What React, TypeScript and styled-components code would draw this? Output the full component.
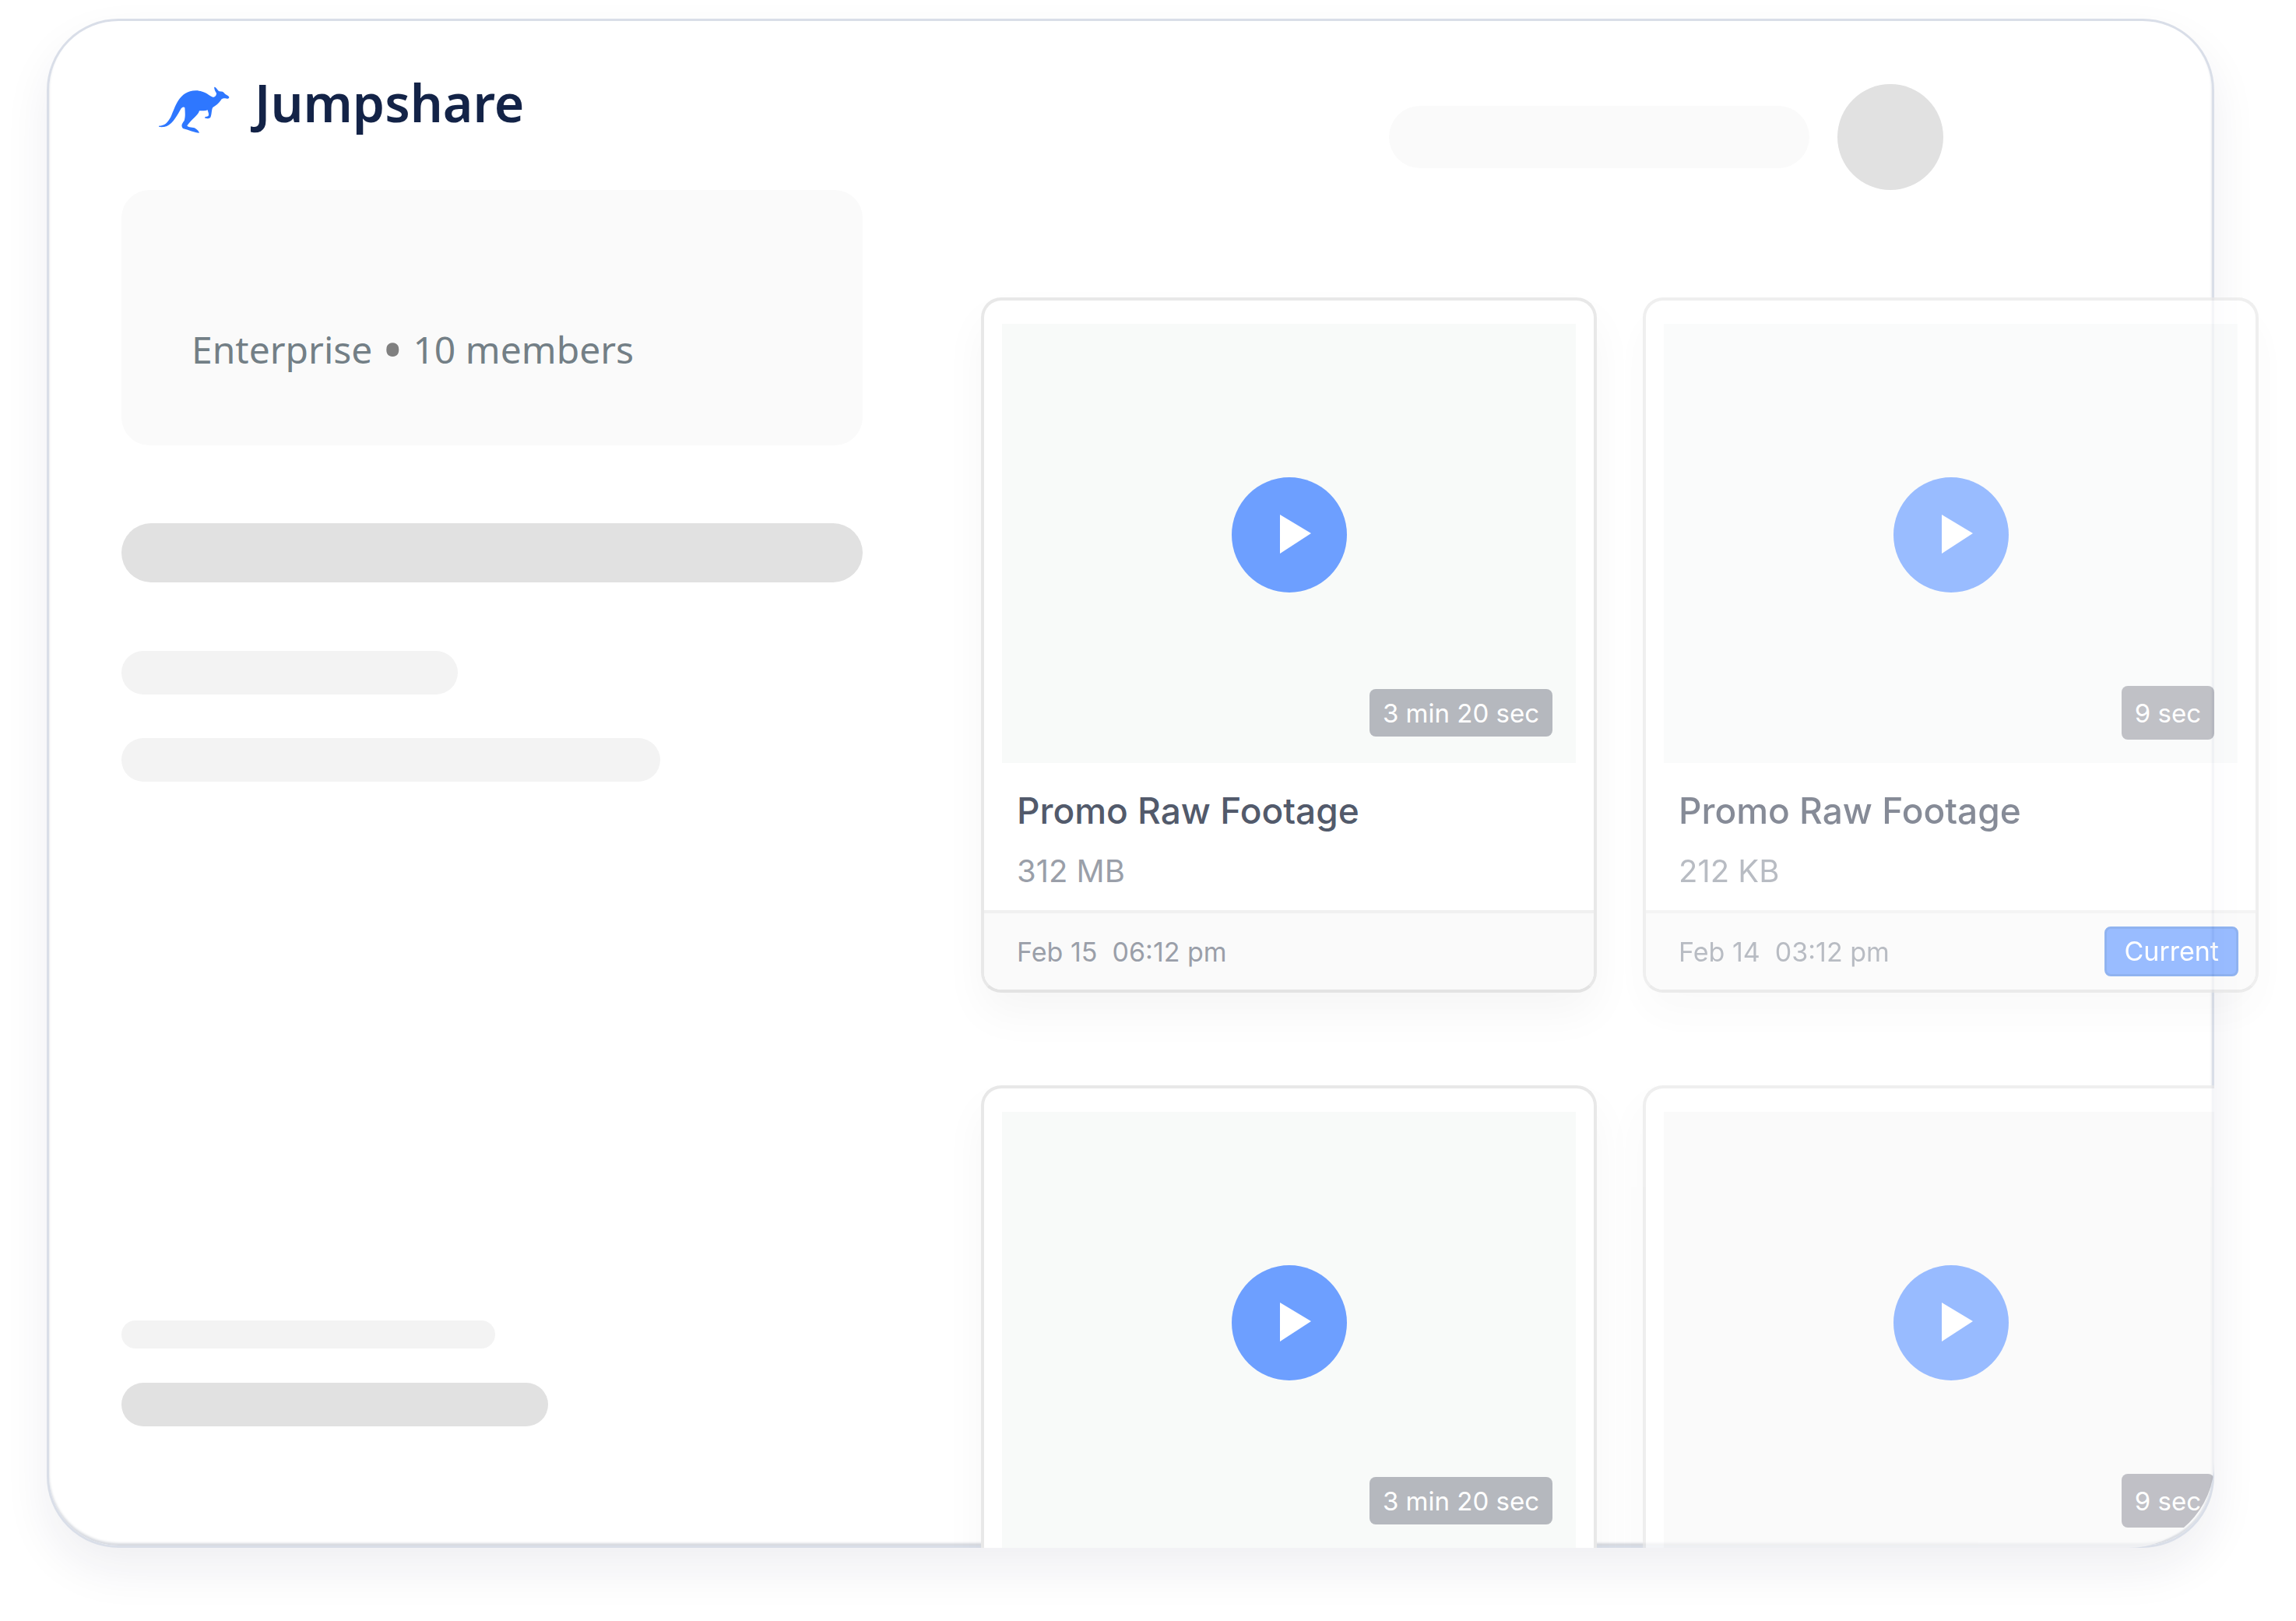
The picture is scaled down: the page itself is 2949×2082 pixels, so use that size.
import React from 'react';
import styled, { createGlobalStyle } from 'styled-components';

const GlobalStyle = createGlobalStyle`
  *, *::before, *::after { box-sizing: border-box; }
  html, body, #root { height: 100%; }
  body {
    margin: 0;
    background: #fff;
    overflow: hidden;
    font-family: Inter, "Liberation Sans", sans-serif;
  }
`;

const Page = styled.div`
  display: flex;
  height: 100%;
  min-height: 1400px;
  padding: 24px 105px 94px 60px;
`;

const Window = styled.div`
  flex: 1;
  min-width: 0;
  display: grid;
  grid-template-columns: minmax(0, 1045fr) minmax(0, 1733fr);
  grid-template-rows: minmax(0, 1fr);
  border: 3px solid #d9dee8;
  border-radius: 92px;
  background: #fff;
  box-shadow:
    0 28px 60px rgba(24, 24, 64, 0.07),
    inset 0 -3px 3px rgba(120, 130, 150, 0.3);
`;

const Sidebar = styled.aside`
  display: flex;
  flex-direction: column;
  align-items: flex-start;
  padding: 64px 0 153px 93px;
`;

const Brand = styled.a`
  display: flex;
  align-items: flex-end;
  gap: 32px;
  margin: 0 0 73px 47px;
  color: #132347;
  font-family: "Noto Sans", "Open Sans", sans-serif;
  font-size: 66px;
  font-weight: 600;
  line-height: 80px;
  text-decoration: none;
`;

const TeamPanel = styled.section`
  width: 100%;
  padding: 173px 90px 91px;
  border-radius: 36px;
  background: #fafafa;
`;

const TeamPlan = styled.p`
  margin: 0;
  color: #737f86;
  font-family: "Noto Sans", "Open Sans", sans-serif;
  font-size: 48px;
  line-height: 64px;
  white-space: nowrap;
`;

const Dot = styled.span`
  color: #808080;
  font-size: 72px;
  line-height: 0;
  vertical-align: -8px;
`;

const tones = { dark: '#e1e1e1', mid: '#f3f3f3', light: '#fafafa' };

const Bar = styled.div<{ $tone: keyof typeof tones; $width?: number; $height: number }>`
  flex: none;
  width: ${(p) => (p.$width ? `${p.$width}px` : '100%')};
  max-width: 100%;
  height: ${(p) => p.$height}px;
  border-radius: 40px;
  background: ${(p) => tones[p.$tone]};
`;

const NavBars = styled.div`
  display: flex;
  flex-direction: column;
  gap: 56px;
  width: 100%;
  margin-top: 88px;
`;

const ActiveNav = styled.div`
  width: 100%;
  margin-top: 100px;
`;

const FootBars = styled.div`
  display: flex;
  flex-direction: column;
  gap: 44px;
  width: 100%;
  margin-top: auto;
`;

const Main = styled.main`
  display: flex;
  flex-direction: column;
  min-width: 0;
  margin: 0 -3px -3px 0;
`;

const TopBar = styled.header`
  display: flex;
  justify-content: flex-end;
  align-items: center;
  gap: 36px;
  padding: 81px 348px 138px 0;
`;

const Avatar = styled.div`
  flex: none;
  width: 136px;
  height: 136px;
  border-radius: 50%;
  background: #e1e1e1;
`;

const Shelf = styled.div`
  padding-left: 152px;
`;

const ClippedShelf = styled(Shelf)`
  flex: 1;
  min-height: 0;
  margin-top: 119px;
  overflow: hidden;
  border-bottom-right-radius: 110px;
`;

const CardGrid = styled.div`
  display: grid;
  grid-template-columns: repeat(2, minmax(0, 1fr));
  gap: 59px;
  margin-right: -57px;
`;

const Card = styled.article<{ $faded?: boolean; $bare?: boolean }>`
  display: flex;
  flex-direction: column;
  padding-bottom: ${(p) => (p.$bare ? 40 : 0)}px;
  border: 4px solid #e8e8e8;
  border-bottom-color: #e3e3e3;
  border-radius: 26px;
  background: #fff;
  box-shadow: 0 28px 56px rgba(0, 0, 0, 0.04);
  opacity: ${(p) => (p.$faded ? 0.7 : 1)};
`;

const Thumb = styled.div<{ $plain?: boolean }>`
  position: relative;
  display: flex;
  align-items: center;
  justify-content: center;
  height: 564px;
  margin: 30px 23px 0;
  padding-bottom: 22px;
  background: ${(p) => (p.$plain ? '#f8f8f8' : '#f8faf9')};
`;

const PlayButton = styled.button`
  width: 148px;
  height: 148px;
  padding: 0;
  border: 0;
  border-radius: 50%;
  background: #6d9fff;
  cursor: pointer;

  svg {
    display: block;
  }
`;

const Duration = styled.span<{ $short?: boolean }>`
  position: absolute;
  right: 30px;
  bottom: ${(p) => (p.$short ? 30 : 34)}px;
  padding: ${(p) => (p.$short ? '13px 17px 11px' : '9px 17px 7px')};
  border-radius: 8px;
  background: ${(p) => (p.$short ? '#a5a6ae' : '#b5b8be')};
  color: #fff;
  font-size: 33px;
  line-height: 45px;
  white-space: nowrap;
`;

const Info = styled.div`
  display: flex;
  flex-direction: column;
  gap: 25px;
  padding: 33px 42px 25px;
`;

const Title = styled.h2`
  margin: 0;
  color: #525a6b;
  font-size: 46px;
  font-weight: 500;
  line-height: 56px;
`;

const Size = styled.p`
  margin: 0;
  color: #9a9fa9;
  font-size: 40px;
  line-height: 50px;
`;

const CardFooter = styled.footer`
  display: flex;
  align-items: center;
  justify-content: space-between;
  height: 102px;
  padding: 0 22px 0 42px;
  border-top: 4px solid #f0f0f0;
  border-radius: 0 0 22px 22px;
  background: #fafafa;
`;

const Stamp = styled.time`
  color: #9a9fa9;
  font-size: 34px;
  line-height: 45px;
  white-space: pre;
`;

const CurrentTag = styled.span`
  padding: 9px 22px 10px;
  border: 3px solid #6192ea;
  border-radius: 8px;
  background: #6d9fff;
  color: #fff;
  font-size: 34px;
  line-height: 39px;
`;

function Kangaroo() {
  return (
    <svg width="92" height="60" viewBox="69 90 276 180" fill="#2e77ff" aria-hidden="true">
      <path d="M72 242 C95 242 106 230 118 208 C135 172 148 107 215 106 C250 106 266 126 280 131 C289 132 294 124 294 116 C289 108 284 98 286 92 C291 91 297 103 305 109 C315 109 322 111 325 117 C330 122 340 125 343 131 C343 138 335 138 328 136 C318 136 315 137 311 143 C303 155 292 163 280 171 C275 178 276 200 271 209 C266 215 252 215 249 211 C250 205 258 207 263 203 C266 196 262 190 260 181 C250 185 240 183 228 184 C225 200 200 215 181 241 C184 250 205 246 213 252 C220 256 226 263 228 269 C215 270 185 257 165 252 C155 240 163 232 170 222 C175 205 173 190 172 172 C169 167 162 169 158 175 C145 198 128 232 103 243 C90 248 78 246 73 246 Z" />
    </svg>
  );
}

function Play() {
  return (
    <PlayButton type="button" aria-label="Play">
      <svg width="148" height="148" viewBox="0 0 148 148" fill="#fff" aria-hidden="true">
        <path d="M62 48 L102 72 L62 98 Z" />
      </svg>
    </PlayButton>
  );
}

type Clip = {
  duration: string;
  title?: string;
  size?: string;
  stamp?: string;
  faded?: boolean;
  plain?: boolean;
  current?: boolean;
};

function ClipCard({ duration, title, size, stamp, faded, plain, current }: Clip) {
  return (
    <Card $faded={faded} $bare={!title}>
      <Thumb $plain={plain}>
        <Play />
        <Duration $short={faded}>{duration}</Duration>
      </Thumb>
      {title && (
        <>
          <Info>
            <Title>{title}</Title>
            <Size>{size}</Size>
          </Info>
          <CardFooter>
            <Stamp>{stamp}</Stamp>
            {current && <CurrentTag>Current</CurrentTag>}
          </CardFooter>
        </>
      )}
    </Card>
  );
}

const firstRow: Clip[] = [
  { duration: '3 min 20 sec', title: 'Promo Raw Footage', size: '312 MB', stamp: 'Feb 15  06:12 pm' },
  {
    duration: '9 sec',
    title: 'Promo Raw Footage',
    size: '212 KB',
    stamp: 'Feb 14  03:12 pm',
    faded: true,
    current: true,
  },
];

const secondRow: Clip[] = [
  { duration: '3 min 20 sec' },
  { duration: '9 sec', faded: true, plain: true },
];

export default function App() {
  return (
    <>
      <GlobalStyle />
      <Page>
        <Window>
          <Sidebar>
            <Brand href="#">
              <Kangaroo />
              Jumpshare
            </Brand>
            <TeamPanel>
              <TeamPlan>
                Enterprise <Dot>•</Dot> 10 members
              </TeamPlan>
            </TeamPanel>
            <ActiveNav>
              <Bar $tone="dark" $height={76} />
            </ActiveNav>
            <NavBars>
              <Bar $tone="mid" $width={432} $height={56} />
              <Bar $tone="mid" $width={692} $height={56} />
            </NavBars>
            <FootBars>
              <Bar $tone="mid" $width={480} $height={36} />
              <Bar $tone="dark" $width={548} $height={56} />
            </FootBars>
          </Sidebar>
          <Main>
            <TopBar>
              <Bar $tone="light" $width={540} $height={80} />
              <Avatar />
            </TopBar>
            <Shelf>
              <CardGrid>
                {firstRow.map((clip) => (
                  <ClipCard key={clip.duration} {...clip} />
                ))}
              </CardGrid>
            </Shelf>
            <ClippedShelf>
              <CardGrid>
                {secondRow.map((clip) => (
                  <ClipCard key={clip.duration} {...clip} />
                ))}
              </CardGrid>
            </ClippedShelf>
          </Main>
        </Window>
      </Page>
    </>
  );
}
